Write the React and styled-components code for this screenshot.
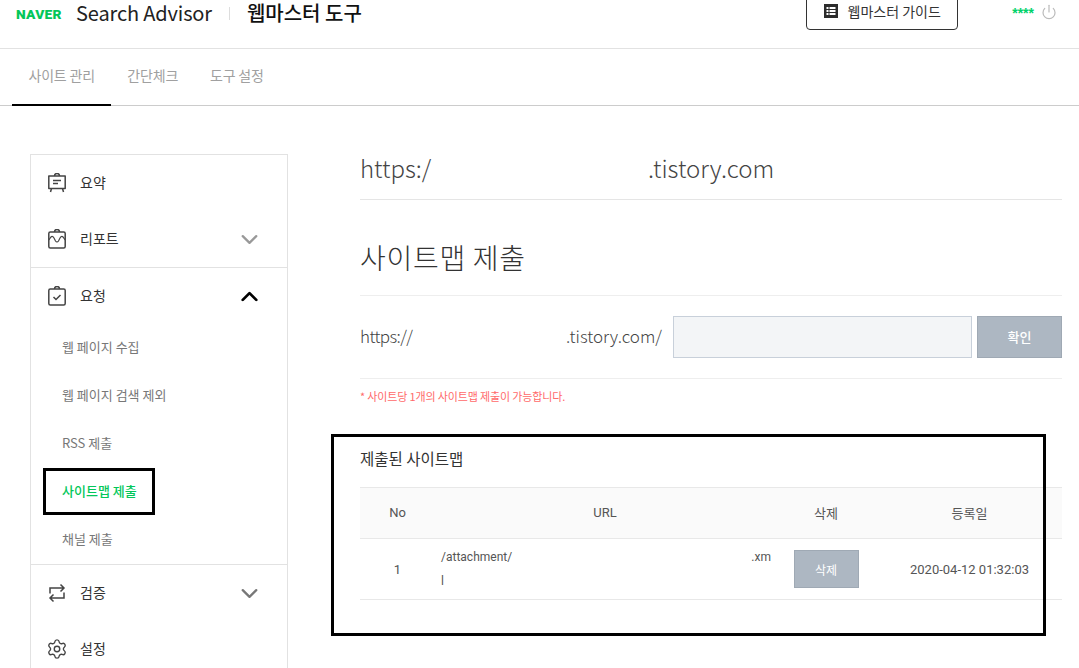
import React from "react";
import styled, { createGlobalStyle } from "styled-components";
import { ChevronDown, ChevronUp, Power, Settings } from "lucide-react";

const GlobalStyle = createGlobalStyle`
  html, body {
    margin: 0;
    height: 100%;
    overflow: hidden;
    background: #fff;
  }
  body {
    font-family: "Noto Sans CJK KR", "Noto Sans", sans-serif;
  }
  *, *::after {
    box-sizing: border-box;
  }
`;

const BoardIcon = () => (
  <svg width="18" height="20" viewBox="0 0 18 20" fill="none" stroke="#444" strokeWidth="1.5">
    <path d="M.8 3h16.4v12.500H.8z" strokeLinejoin="round" />
    <path d="M6.500 3a2.500 2.500 0 0 1 5 0M5 7.500h8M5 10.500h5M3.500 15.500l-1 3.500M14.500 15.500l1 3.500" />
  </svg>
);

const WaveIcon = () => (
  <svg width="18" height="20" viewBox="0 0 18 20" fill="none" stroke="#444" strokeWidth="1.5">
    <rect x=".8" y="3" width="16.400" height="16" rx="1.500" />
    <path d="M6.500 3a2.500 2.500 0 0 1 5 0" />
    <path d="M.8 11L3 8Q4.500 6.500 6 9L7.500 12Q9 14 10.500 12L12 9Q13.500 6.500 15 8L17.200 11" strokeWidth="1.200" />
  </svg>
);

const CheckIcon = () => (
  <svg width="18" height="20" viewBox="0 0 18 20" fill="none" stroke="#444" strokeWidth="1.5">
    <rect x=".8" y="3" width="16.400" height="16" rx="1.500" />
    <path d="M6.500 3a2.500 2.500 0 0 1 5 0M5.500 11l2.500 2.500 4.500-4.500" />
  </svg>
);

const SwapIcon = () => (
  <svg width="18" height="20" viewBox="0 0 18 20" fill="none" stroke="#444" strokeWidth="1.500">
    <path d="M2 10.500V5h14M12.500 1.500L16 5l-3.500 3.500M16 9.500V15H2M5.500 11.500L2 15l3.500 3.500" />
  </svg>
);

const GuideIcon = () => (
  <svg width="14" height="14" viewBox="0 0 14 14">
    <rect width="14" height="14" fill="#2c2c2c" />
    <path d="M2.500 3h2v2h-2zM5.500 3h6v2h-6zM2.500 6h2v2h-2zM5.500 6h6v2h-6zM2.500 9h2v2h-2zM5.500 9h6v2h-6z" fill="#fff" />
  </svg>
);

const menuTop = [
  { label: "요약", icon: <BoardIcon /> },
  { label: "리포트", icon: <WaveIcon />, chevron: true },
];

const subItems = ["웹 페이지 수집", "웹 페이지 검색 제외", "RSS 제출", "사이트맵 제출", "채널 제출"];

const App = () => {
  return (
    <Page>
      <GlobalStyle />
      <Header>
        <LogoSlot>
          <Logo>NAVER</Logo>
        </LogoSlot>
        <Product>Search Advisor</Product>
        <HeaderDivider />
        <ToolName>웹마스터 도구</ToolName>
        <GuideButton>
          <GuideIcon />
          웹마스터 가이드
        </GuideButton>
        <UserMask>****</UserMask>
        <PowerIcon size={16} color="#bbb" strokeWidth={1.8} />
      </Header>

      <Tabs>
        <Tab $active>사이트 관리</Tab>
        <Tab>간단체크</Tab>
        <Tab>도구 설정</Tab>
      </Tabs>

      <Content>
        <Sidebar>
          <MenuGroup>
            {menuTop.map(item => (
              <MenuItem key={item.label}>
                <MenuIcon>{item.icon}</MenuIcon>
                <MenuLabel>{item.label}</MenuLabel>
                {item.chevron && <ChevronDown size={27} color="#999" strokeWidth={2} />}
              </MenuItem>
            ))}
          </MenuGroup>
          <MenuGroup>
            <MenuItem>
              <MenuIcon>
                <CheckIcon />
              </MenuIcon>
              <MenuLabel>요청</MenuLabel>
              <ChevronUp size={27} color="#000" strokeWidth={2.5} />
            </MenuItem>
            {subItems.map(label => (
              <SubItem key={label} $active={label === "사이트맵 제출"}>
                {label}
              </SubItem>
            ))}
          </MenuGroup>
          <MenuGroup $last>
            <MenuItem>
              <MenuIcon>
                <SwapIcon />
              </MenuIcon>
              <MenuLabel>검증</MenuLabel>
              <ChevronDown size={27} color="#777" strokeWidth={2} />
            </MenuItem>
            <MenuItem>
              <MenuIcon>
                <GearWrap>
                  <Settings size={22} color="#444" strokeWidth={1.5} />
                </GearWrap>
              </MenuIcon>
              <MenuLabel>설정</MenuLabel>
            </MenuItem>
          </MenuGroup>
        </Sidebar>

        <Main>
          <SiteUrl>
            <span>https:/</span>
            <span>.tistory.com</span>
          </SiteUrl>
          <Heading>사이트맵 제출</Heading>
          <FormRow>
            <Prefix>
              <span>https://</span>
              <span>.tistory.com/</span>
            </Prefix>
            <SitemapInput />
            <ConfirmButton>확인</ConfirmButton>
          </FormRow>
          <Note>* 사이트당 1개의 사이트맵 제출이 가능합니다.</Note>

          <Submitted>
            <SubmittedTitle>제출된 사이트맵</SubmittedTitle>
            <HeadRow>
              <Cell>No</Cell>
              <Cell>URL</Cell>
              <Cell>삭제</Cell>
              <Cell>등록일</Cell>
            </HeadRow>
            <BodyRow>
              <Cell>1</Cell>
              <UrlCell>
                <UrlLine>
                  <span>/attachment/</span>
                  <span>.xm</span>
                </UrlLine>
                <span>l</span>
              </UrlCell>
              <Cell>
                <DeleteButton>삭제</DeleteButton>
              </Cell>
              <Cell>2020-04-12 01:32:03</Cell>
            </BodyRow>
          </Submitted>
        </Main>
      </Content>
    </Page>
  );
};

const Page = styled.div`
  width: 1079px;
  height: 668px;
  overflow: hidden;
  color: #333;
`;

const Header = styled.header`
  display: flex;
  align-items: center;
  height: 71px;
  margin-top: -22px;
  padding: 0 22px 0 16px;
  border-bottom: 1px solid #e2e2e2;
`;

const LogoSlot = styled.div`
  width: 60px;
  padding-top: 3px;
`;

const Logo = styled.span`
  display: block;
  font-family: Roboto, sans-serif;
  font-weight: 900;
  font-size: 12px;
  line-height: 14px;
  letter-spacing: 0.2px;
  color: #03c75a;
  transform: scaleX(1.15);
  transform-origin: left center;
`;

const Product = styled.span`
  font-size: 20px;
  line-height: 20px;
  color: #222;
  letter-spacing: -0.15px;
`;

const HeaderDivider = styled.i`
  width: 1px;
  height: 13px;
  margin: 0 17px;
  background: #ddd;
`;

const ToolName = styled.strong`
  font-size: 20px;
  line-height: 20px;
  font-weight: 500;
  color: #111;
`;

const GuideButton = styled.button`
  display: flex;
  align-items: center;
  justify-content: center;
  gap: 10px;
  width: 152px;
  height: 42px;
  margin: -8px 0 0 auto;
  padding: 4px 0 0;
  background: #fff;
  border: 1px solid #333;
  border-radius: 4px;
  font-family: inherit;
  font-size: 14px;
  color: #333;
`;

const UserMask = styled.span`
  margin: 0 7px 0 54px;
  font-family: "Liberation Sans", sans-serif;
  font-weight: 700;
  font-size: 14px;
  line-height: 14px;
  color: #00d26a;
`;

const PowerIcon = styled(Power)`
  margin-top: -2px;
`;

const Tabs = styled.nav`
  display: flex;
  gap: 16px;
  height: 57px;
  padding-left: 12px;
  border-bottom: 1px solid #ccc;
`;

const Tab = styled.a`
  display: flex;
  align-items: center;
  height: 57px;
  padding: 0 ${props => (props.$active ? "16.5px" : "0")} 3px;
  border-bottom: 2px solid ${props => (props.$active ? "#000" : "transparent")};
  font-size: 14px;
  letter-spacing: -0.2px;
  color: #a0a0a0;
  &:nth-child(2) {
    margin-right: 16px;
  }
`;

const Content = styled.div`
  display: flex;
  gap: 72px;
  padding: 48px 17px 0 30px;
`;

const Sidebar = styled.aside`
  flex: 0 0 258px;
  height: 540px;
  border: 1px solid #e2e2e2;
`;

const MenuGroup = styled.div`
  border-bottom: ${props => (props.$last ? "0" : "1px solid #e2e2e2")};
`;

const MenuItem = styled.div`
  display: flex;
  align-items: center;
  height: 56px;
  padding: 0 24px 0 17px;
`;

const MenuIcon = styled.span`
  display: flex;
  width: 32px;
`;

const GearWrap = styled.span`
  display: flex;
  margin-left: -2px;
`;

const MenuLabel = styled.span`
  flex: 1;
  padding-bottom: 2px;
  font-size: 14px;
  color: #333;
`;

const SubItem = styled.div`
  position: relative;
  display: flex;
  align-items: center;
  height: 48px;
  padding: 0 0 3px 31px;
  font-size: 13px;
  font-weight: ${props => (props.$active ? 500 : 400)};
  color: ${props => (props.$active ? "#03c75a" : "#777")};
  ${props =>
    props.$active &&
    `
    &::after {
      content: "";
      position: absolute;
      left: 12px;
      top: 0;
      width: 112px;
      height: 47px;
      border: 3px solid #000;
    }
  `}
`;

const Main = styled.main`
  flex: 1;
  min-width: 0;
`;

const SiteUrl = styled.div`
  display: flex;
  align-items: center;
  height: 46px;
  padding-bottom: 18px;
  border-bottom: 1px solid #e5e5e5;
  font-size: 24px;
  font-weight: 300;
  color: #444;
  span:first-child {
    width: 288px;
  }
`;

const Heading = styled.h2`
  display: flex;
  align-items: center;
  height: 96px;
  margin: 0;
  padding-top: 19px;
  border-bottom: 1px solid #eee;
  font-size: 28px;
  font-weight: 300;
  letter-spacing: 0.7px;
  color: #333;
`;

const FormRow = styled.div`
  display: flex;
  align-items: center;
  gap: 5px;
  height: 83px;
  border-bottom: 1px solid #eee;
`;

const Prefix = styled.div`
  display: flex;
  flex: 0 0 308px;
  padding-bottom: 4px;
  font-size: 17px;
  font-weight: 300;
  color: #444;
  span:first-child {
    width: 206px;
    letter-spacing: -0.6px;
  }
`;

const SitemapInput = styled.input`
  flex: 1;
  height: 42px;
  background: #f3f5f7;
  border: 1px solid #c8d0da;
`;

const ConfirmButton = styled.button`
  flex: 0 0 85px;
  height: 42px;
  padding: 0 0 2px;
  background: #adb7c2;
  border: 1px solid #9fa9b4;
  font-family: inherit;
  font-size: 13px;
  font-weight: 500;
  color: #fff;
`;

const Note = styled.p`
  height: 36px;
  margin: 0;
  font-size: 11px;
  line-height: 34px;
  letter-spacing: -0.14px;
  color: #ff6a6a;
`;

const Submitted = styled.section`
  position: relative;
  margin-top: 29px;
  &::after {
    content: "";
    position: absolute;
    left: -29px;
    top: -10px;
    width: 715px;
    height: 202px;
    border: 3px solid #000;
    pointer-events: none;
  }
`;

const SubmittedTitle = styled.h3`
  height: 43px;
  margin: 0;
  font-size: 15.5px;
  font-weight: 400;
  line-height: 28px;
  color: #333;
`;

const tableColumns = "75px 340px 102px 185px";

const HeadRow = styled.div`
  display: grid;
  grid-template-columns: ${tableColumns};
  align-items: center;
  height: 52px;
  padding-bottom: 2px;
  background: #fafafa;
  border-top: 1px solid #e8e8e8;
  border-bottom: 1px solid #e8e8e8;
  font-size: 13px;
  color: #555;
`;

const BodyRow = styled.div`
  display: grid;
  grid-template-columns: ${tableColumns};
  align-items: center;
  height: 61px;
  border-bottom: 1px solid #e8e8e8;
  font-size: 13px;
  color: #555;
`;

const Cell = styled.div`
  display: flex;
  justify-content: center;
  font-family: Roboto, "Noto Sans CJK KR", sans-serif;
`;

const UrlCell = styled.div`
  display: flex;
  flex-direction: column;
  gap: 6px;
  padding: 0 4px 0 6px;
  font-family: Roboto, sans-serif;
  font-size: 12px;
  line-height: 18px;
`;

const UrlLine = styled.div`
  display: flex;
  justify-content: space-between;
`;

const DeleteButton = styled.button`
  width: 65px;
  height: 38px;
  background: #adb7c2;
  border: 1px solid #9fa9b4;
  font-family: "Noto Sans CJK KR", sans-serif;
  font-size: 12px;
  color: #fff;
`;

export default App;
